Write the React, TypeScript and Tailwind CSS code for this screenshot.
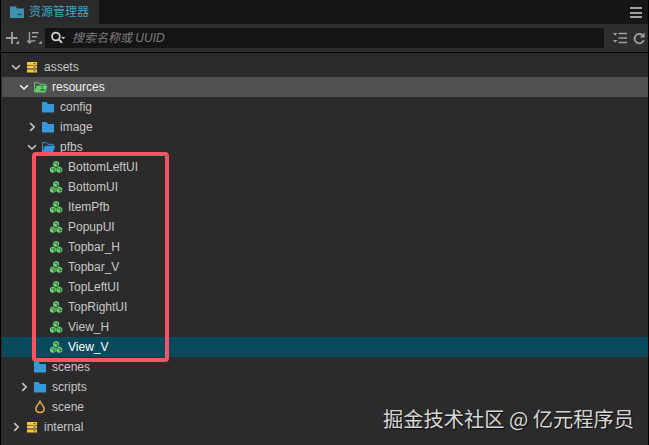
import { clsx } from "clsx";

type IconKind = "db" | "folder" | "folderOpen" | "bundle" | "prefab" | "scene";

type TreeNode = {
  name: string;
  icon: IconKind;
  depth: 0 | 1 | 2 | 3;
  arrow?: "open" | "closed";
  state?: "hover" | "selected";
};

const NODES: TreeNode[] = [
  { name: "assets", icon: "db", depth: 0, arrow: "open" },
  { name: "resources", icon: "bundle", depth: 1, arrow: "open", state: "hover" },
  { name: "config", icon: "folder", depth: 2 },
  { name: "image", icon: "folder", depth: 2, arrow: "closed" },
  { name: "pfbs", icon: "folderOpen", depth: 2, arrow: "open" },
  { name: "BottomLeftUI", icon: "prefab", depth: 3 },
  { name: "BottomUI", icon: "prefab", depth: 3 },
  { name: "ItemPfb", icon: "prefab", depth: 3 },
  { name: "PopupUI", icon: "prefab", depth: 3 },
  { name: "Topbar_H", icon: "prefab", depth: 3 },
  { name: "Topbar_V", icon: "prefab", depth: 3 },
  { name: "TopLeftUI", icon: "prefab", depth: 3 },
  { name: "TopRightUI", icon: "prefab", depth: 3 },
  { name: "View_H", icon: "prefab", depth: 3 },
  { name: "View_V", icon: "prefab", depth: 3, state: "selected" },
  { name: "scenes", icon: "folder", depth: 1 },
  { name: "scripts", icon: "folder", depth: 1, arrow: "closed" },
  { name: "scene", icon: "scene", depth: 1 },
  { name: "internal", icon: "db", depth: 0, arrow: "closed" },
];

const INDENT = {
  0: "pl-2",
  1: "pl-4",
  2: "pl-6",
  3: "pl-8",
} as const;

function Arrow({ dir }: { dir?: "open" | "closed" }) {
  return (
    <svg width="12" height="12" viewBox="0 0 12 12" fill="none" stroke="currentColor" strokeWidth="1.6">
      {dir === "open" && <path d="M2.1 4.2 6 8l3.9-3.8" />}
      {dir === "closed" && <path d="M4.2 2.1 8.2 6 4.2 9.9" />}
    </svg>
  );
}

function Cube({ x, y }: { x: number; y: number }) {
  return (
    <g transform={`translate(${x} ${y})`}>
      <path d="M3.1 0 6 1.4v3.5L3.1 6.4.2 4.900V1.400z" fill="#69d66f" />
      <path d="M1.200 1.900 3.100 2.800 5 1.900" stroke="#2b4a30" strokeWidth=".8" fill="none" />
      <path d="M3.700 3.800 5.100 3.100v1.400l-1.400.8z" fill="#2b3d2d" />
    </g>
  );
}

function NodeIcon({ kind }: { kind: IconKind }) {
  return (
    <svg width="14" height="14" viewBox="0 0 14 14" fill="none">
      {kind === "db" && (
        <>
          <path d="M1 2h10v3H1zM1 5.800h10v2.800H1zM1 9.400h10v3H1z" fill="#f2c94c" />
          <path d="M2 5.400h8M2 9h8" stroke="#a98e3c" strokeWidth=".8" />
          <path d="M7.500 3.500H9.500M7.500 7.200H9.500M7.500 10.900H9.500" stroke="#5c4d22" />
        </>
      )}
      {kind === "folder" && <path d="M0 2h4.500l1.600 2.100H12v8.400H0z" fill="#3498db" />}
      {kind === "folderOpen" && (
        <>
          <path d="M.5 12V2.700h4l1.300 1.600h5.300v1.800" stroke="#3498db" />
          <path d="M2.800 5.800h10.400l-2.100 6.700H.3z" fill="#3498db" />
        </>
      )}
      {kind === "bundle" && (
        <>
          <path d="M.6 12V2.700h4l1.300 1.600h5.300v1.800" stroke="#5fce69" />
          <path d="M2.800 5.800h10.600l-2.100 6.700H.3z" fill="#5fce69" />
          <path d="M8.200 6.800v1.800M6.500 10.800l1.200-1.200h1.400l1.300 1.200" stroke="#35593b" strokeWidth="1.2" />
        </>
      )}
      {kind === "prefab" && (
        <>
          <Cube x={3} y={0.9} />
          <Cube x={-0.2} y={6.5} />
          <Cube x={6.2} y={6.5} />
        </>
      )}
      {kind === "scene" && (
        <path
          d="M6 1.400C5.300 3.700 1.900 5.800 1.900 8.800c0 2.200 1.800 3.700 4.100 3.700s4.100-1.500 4.100-3.700C10.100 5.800 6.700 3.700 6 1.400z"
          stroke="#efa94b"
          strokeWidth="1.5"
        />
      )}
    </svg>
  );
}

function TreeRow({ node }: { node: TreeNode }) {
  return (
    <div
      className={clsx(
        "flex h-5 items-center text-xs",
        INDENT[node.depth],
        !node.state && "text-[#c8c8c8]",
        node.state === "hover" && "bg-[#505050] text-[#f0f0f0]",
        node.state === "selected" && "bg-[#094a5d] text-white"
      )}
    >
      <Arrow dir={node.arrow} />
      <span className="ml-1 mr-1 shrink-0">
        <NodeIcon kind={node.icon} />
      </span>
      <span className="leading-5">{node.name}</span>
    </div>
  );
}

function TabBar() {
  return (
    <div className="flex h-6 items-stretch justify-between bg-[#151515]">
      <div className="flex w-[98px] items-center bg-[#2b2b2b] pl-[9px] text-[#3fa3c0]">
        <svg width="15" height="12" viewBox="0 0 15 12">
          <path d="M0 .5h5.800L7.200 2.500H14V12H0z" fill="#3c92ad" />
          <path d="M7.500 8.500h4" stroke="#1d4552" strokeWidth="1.300" />
        </svg>
        <span className="ml-1 whitespace-nowrap text-xs leading-6">资源管理器</span>
      </div>
      <div className="flex items-center pr-1.5 pt-0.5 text-[#a0a0a0]">
        <svg width="12" height="12" viewBox="0 0 12 12" fill="currentColor">
          <path d="M0 0h12v2H0zM0 5h12v2H0zM0 9h12v2H0z" />
        </svg>
      </div>
    </div>
  );
}

function Toolbar() {
  return (
    <div className="flex h-[29px] items-center border-b border-black bg-[#2e2e2e] pl-1 text-[#a0a0a0]">
      <svg className="shrink-0" width="15" height="14" viewBox="0 0 15 14">
        <path d="M1 7h11.500M7 1v12" stroke="currentColor" strokeWidth="1.800" />
        <path d="M14 9.500v3.500H10.500z" fill="currentColor" />
      </svg>
      <svg className="ml-1.5 shrink-0" width="16" height="14" viewBox="0 0 16 14" fill="none">
        <path d="M3.500 1v11M1.300 9.500 3.500 12l2.200-2.500M6 1.700h6.500M6 5.800h5M6 9.900h3.500" stroke="currentColor" strokeWidth="1.400" />
        <path d="M15.800 9.500v3.500h-3.500z" fill="currentColor" />
      </svg>
      <div className="ml-[3px] flex h-5 w-[559px] shrink-0 items-center bg-[#151515] pl-1.5">
        <svg width="15" height="14" viewBox="0 0 15 14" fill="none">
          <circle cx="4.900" cy="5.500" r="3.900" stroke="#d0d0d0" strokeWidth="1.800" />
          <path d="m7.700 8.400 3.300 3.500" stroke="#d0d0d0" strokeWidth="2" />
          <path d="M10.200 6h4.200l-2.100 2.300z" fill="#d0d0d0" />
        </svg>
        <span className="ml-1.5 text-xs italic text-[#7c7c7c]">搜索名称或 UUID</span>
      </div>
      <svg className="ml-[9px] shrink-0" width="14" height="12" viewBox="0 0 14 12">
        <path d="M0 1h4.400L2.200 3.800zM0 8h4.400L2.200 10.800z" fill="currentColor" />
        <path d="M5.500 1.500H14M5.500 6H14M5.500 10.500H14" stroke="currentColor" strokeWidth="1.300" />
      </svg>
      <svg className="ml-1.5 shrink-0" width="13" height="13" viewBox="0 0 13 13" fill="none">
        <path d="M10.700 8.300A4.700 4.700 0 1 1 9.400 3.100" stroke="currentColor" strokeWidth="1.800" />
        <path d="M11.700.500v5h-5z" fill="currentColor" />
      </svg>
    </div>
  );
}

export default function App() {
  return (
    <div className="relative h-[445px] w-[649px] overflow-hidden border-x border-black bg-[#2b2b2b] font-['Liberation_Sans','Noto_Sans_CJK_SC',sans-serif]">
      <TabBar />
      <Toolbar />
      <div className="pl-px pt-1">
        {NODES.map((node) => (
          <TreeRow key={node.name} node={node} />
        ))}
      </div>

      {/* Highlight around the prefab list */}
      <div className="absolute left-[31px] top-[152px] h-[210px] w-[137px] rounded-[4px] border-4 border-[#fb5263]" />

      <p className="absolute bottom-2.5 right-[14px] whitespace-nowrap font-['Noto_Sans_CJK_SC',sans-serif] text-[20.25px] leading-8 text-[#d6d6d6] [text-shadow:1px_1px_1px_#111]">
        掘金技术社区 @ 亿元程序员
      </p>
    </div>
  );
}
